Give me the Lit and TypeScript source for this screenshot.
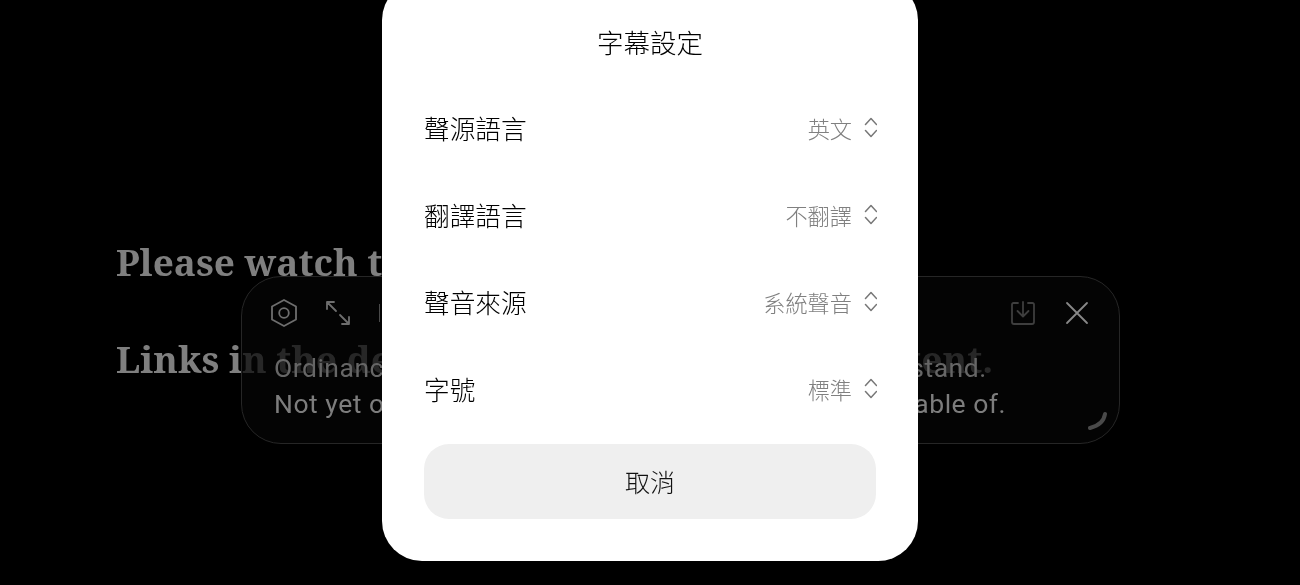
import { LitElement, html, css } from "lit";
import { customElement } from "lit/decorators.js";

const rows: [string, string][] = [
  ["聲源語言", "英文"],
  ["翻譯語言", "不翻譯"],
  ["聲音來源", "系統聲音"],
  ["字號", "標準"],
];

@customElement("app-root")
export class AppRoot extends LitElement {
  static styles = css`
    :host { display: block; width: 1300px; height: 585px; overflow: hidden; background: #000; position: relative;
      font-family: "Noto Sans CJK TC", "Noto Sans", sans-serif; }
    .article { padding: 213px 0 0 116px; font-family: "Noto Serif", "Liberation Serif", "DejaVu Serif", serif; font-weight: 700;
      font-size: 37px; line-height: 97px; color: #7f7f7f; white-space: nowrap; will-change: transform; }
    .article p { margin: 0; }
    .panel { position: absolute; left: 241px; top: 276px; width: 879px; height: 168px; box-sizing: border-box; will-change: transform;
      border: 1px solid #262626; border-radius: 40px; background: rgba(5,5,5,.72); }
    .tools { display: flex; align-items: center; padding: 19px 30px 0 28px; height: 34px; }
    .tools svg { display: block; flex: none; }
    .icon-gap { width: 27px; flex: none; }
    .tick { width: 1px; height: 18px; margin-left: 1px; background: #4a4a4a; flex: none; }
    .right-gap { width: 29px; flex: none; }
    .spacer { flex: 1; }
    .caption { margin: 20px 0 0 32px; font-family: Roboto, sans-serif; font-size: 26.5px; letter-spacing: .5px; line-height: 36px; color: #7d7d7d; white-space: nowrap; }
    .caption .dim { color: #666; }
    .grip { position: absolute; right: 12px; bottom: 12px; }
    .sheet { position: absolute; left: 382px; top: -20px; width: 536px; height: 581px; box-sizing: border-box; will-change: transform;
      background: #fff; border-radius: 40px; padding: 0 42px; display: flex; flex-direction: column; color: #000; }
    .title { height: 104px; padding-top: 18px; box-sizing: border-box; display: flex; align-items: center; justify-content: center;
      font-size: 26.5px; font-weight: 300; color: #000; }
    .row { height: 87px; display: flex; align-items: center; justify-content: space-between; font-size: 25.7px; font-weight: 300; color: #000; }
    .value { display: flex; align-items: center; gap: 11px; font-size: 22.2px; color: #808080; margin-right: -1px; }
    .value svg { display: block; }
    .cancel { margin-top: 12px; height: 75px; box-sizing: border-box; padding-bottom: 2px; border-radius: 25px; background: #efefef; display: flex; align-items: center;
      justify-content: center; font-size: 25px; font-weight: 300; color: #111; }
  `;

  render() {
    const st = "fill:none;stroke-width:1.8;stroke-linecap:round;stroke-linejoin:round";
    return html`
      <div class="article">
        <p>Please watch this video to the very end.</p>
        <p>Links in the description below for this content.</p>
      </div>
      <div class="panel">
        <div class="tools">
          <svg width="28" height="28" viewBox="0 0 28 28" stroke="#6e6e6e" style=${st}>
            <path d="M14 1 26 7.500V20.500L14 27 2 20.500V7.500Z"/><circle cx="14" cy="14" r="4.800"/>
          </svg>
          <div class="icon-gap"></div>
          <svg width="26" height="26" viewBox="0 0 26 26" stroke="#6e6e6e" style=${st}>
            <path d="M2 9V2H9M2 2 11 11M24 17V24H17M24 24 15 15"/>
          </svg>
          <div class="icon-gap"></div>
          <div class="tick"></div>
          <div class="spacer"></div>
          <svg width="26" height="26" viewBox="0 0 26 26" stroke="#3e3e3e" style=${st}>
            <path d="M8 3H3.500A1.500 1.500 0 0 0 2 4.500V22A2 2 0 0 0 4 24H22A2 2 0 0 0 24 22V4.500A1.500 1.500 0 0 0 22.500 3H18M13 2V16M7.500 11 13 16.500 18.500 11"/>
          </svg>
          <div class="right-gap"></div>
          <svg width="24" height="24" viewBox="0 0 24 24" stroke="#888" style=${st}>
            <path d="M2 2 22 22M22 2 2 22"/>
          </svg>
        </div>
        <div class="caption"><span class="dim">Ordinances and policies are not easy for us to understand.</span><br>Not yet one of those things that we are currently capable of.</div>
        <svg class="grip" width="24" height="24" viewBox="0 0 24 24" style="fill:none;stroke:#4a4a4a;stroke-width:4;stroke-linecap:round">
          <path d="M22 7C21 14 15 19 7 21"/>
        </svg>
      </div>
      <div class="sheet">
        <div class="title">字幕設定</div>
        ${rows.map(([l, v]) => html`
          <div class="row"><span>${l}</span>
            <span class="value">${v}
              <svg width="14" height="24" viewBox="0 0 14 24" style="fill:none;stroke:#777;stroke-width:1.500;stroke-linecap:round;stroke-linejoin:round">
                <path d="M2.500 8.500 8 2.500 13.500 8.500M2.500 14.500 8 20.500 13.500 14.500"/>
              </svg>
            </span>
          </div>`)}
        <div class="cancel">取消</div>
      </div>
    `;
  }
}
